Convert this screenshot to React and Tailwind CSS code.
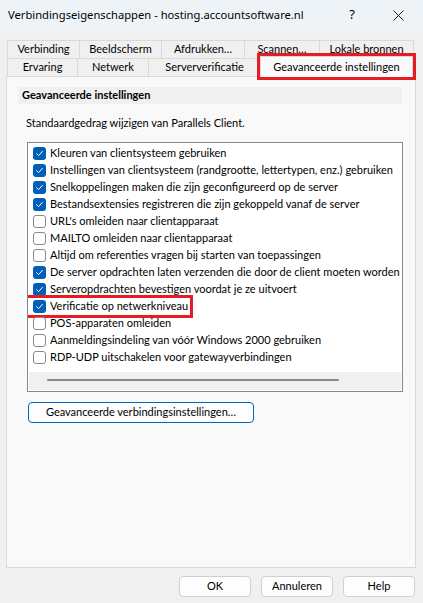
import React from 'react'

const font = { fontFamily: 'Lato, "Noto Sans", sans-serif' }
const titleFont = { fontFamily: '"Noto Sans", sans-serif' }

const items = [
  { label: 'Kleuren van clientsysteem gebruiken', on: true },
  { label: 'Instellingen van clientsysteem (randgrootte, lettertypen, enz.) gebruiken', on: true },
  { label: 'Snelkoppelingen maken die zijn geconfigureerd op de server', on: true },
  { label: 'Bestandsextensies registreren die zijn gekoppeld vanaf de server', on: true },
  { label: "URL's omleiden naar clientapparaat", on: false },
  { label: 'MAILTO omleiden naar clientapparaat', on: false },
  { label: 'Altijd om referenties vragen bij starten van toepassingen', on: false },
  { label: 'De server opdrachten laten verzenden die door de client moeten worden uitgevoerd', on: true },
  { label: 'Serveropdrachten bevestigen voordat je ze uitvoert', on: true },
  { label: 'Verificatie op netwerkniveau', on: true, mark: true },
  { label: 'POS-apparaten omleiden', on: false },
  { label: 'Aanmeldingsindeling van vóór Windows 2000 gebruiken', on: false },
  { label: 'RDP-UDP uitschakelen voor gatewayverbindingen', on: false },
]

function Check({ on }) {
  if (!on) {
    return <span className="w-[13px] h-[13px] shrink-0 rounded-[3px] border border-[#8a8a8a] bg-white" />
  }
  return (
    <span className="w-[13px] h-[13px] shrink-0 rounded-[3px] bg-[#005fb8] flex items-center justify-center">
      <svg width="9" height="9" viewBox="0 0 9 9" fill="none">
        <path d="M1.6 4.7 L3.6 6.6 L7.4 2.4" stroke="white" strokeWidth="1" strokeLinecap="round" strokeLinejoin="round" />
      </svg>
    </span>
  )
}

function Tab({ w, children }) {
  return (
    <div className={`${w} h-full flex items-center justify-center border-t border-l border-r border-[#d9d9d9] bg-[#f0f0f0] -ml-px first:ml-0 whitespace-nowrap`}>
      {children}
    </div>
  )
}

export default function App() {
  return (
    <div className="w-[423px] h-[603px] bg-[#f0f0f0] text-[11px] text-black overflow-hidden flex flex-col" style={font}>
      {/* Title bar */}
      <div className="h-[30px] shrink-0 bg-[#eef3f8] flex items-center pl-[8px]">
        <span className="flex-1 text-[11.2px] whitespace-nowrap" style={titleFont}>Verbindingseigenschappen - hosting.accountsoftware.nl</span>
        <span className="w-[46px] text-center text-[13px]" style={titleFont}>?</span>
        <span className="w-[46px] flex justify-center mr-[2px]">
          <svg width="11" height="11" viewBox="0 0 11 11">
            <path d="M0.5 0.5 L10.5 10.5 M10.5 0.5 L0.5 10.5" stroke="#1a1a1a" strokeWidth="1" />
          </svg>
        </span>
      </div>

      {/* Tabs */}
      <div className="pt-[10px] pl-[7px]">
        <div className="h-[18px] flex">
          <Tab w="w-[73px]">Verbinding</Tab>
          <Tab w="w-[83px]">Beeldscherm</Tab>
          <Tab w="w-[84px]">Afdrukken…</Tab>
          <Tab w="w-[76px]">Scannen…</Tab>
          <Tab w="w-[95px]">Lokale bronnen</Tab>
        </div>
        <div className="h-[18px] flex items-end">
          <Tab w="w-[71px]">Ervaring</Tab>
          <Tab w="w-[72px]">Netwerk</Tab>
          <Tab w="w-[113px]">Serververificatie</Tab>
          <div className="w-[153px] h-[21px] -ml-px -mb-px flex items-center justify-center bg-[#f9f9f9] border-t border-l border-r border-[#d9d9d9] outline outline-[3px] outline-[#e51c23] relative z-10 whitespace-nowrap">
            Geavanceerde instellingen
          </div>
        </div>
      </div>

      {/* Panel */}
      <div className="ml-[6px] w-[410px] h-[492px] bg-[#f9f9f9] border border-[#d9d9d9] pt-[10px] pl-[11px]">
        <div className="w-[384px] h-[17px] bg-[#f0f0f0] flex items-center pl-[4px] font-bold">
          Geavanceerde instellingen
        </div>
        <div className="mt-[11px] pl-[8px]">Standaardgedrag wijzigen van Parallels Client.</div>

        <div className="mt-[10px] ml-[9px] w-[376px] h-[250px] bg-white border border-[#828790] flex flex-col">
          <div className="pt-[2px] flex-1 overflow-hidden">
            {items.map((it) => (
              <div key={it.label} className="h-[17px] flex items-center gap-[4px] pl-[5px] whitespace-nowrap relative">
                <Check on={it.on} />
                <span>{it.label}</span>
                {it.mark && (
                  <div className="absolute left-[-5px] top-[-3px] w-[170px] h-[23px] border-[3px] border-[#e51c23]" />
                )}
              </div>
            ))}
          </div>
          <div className="h-[18px] mx-[1px] mb-[1px] bg-[#f0f0f0] flex items-center">
            <div className="ml-[18px] w-[292px] h-[2px] bg-[#8a8a8a] rounded-full -mt-[1px]" />
          </div>
        </div>

        <button className="mt-[10px] ml-[10px] w-[226px] h-[21px] bg-[#fdfdfd] border border-[#0067c0] rounded-[4px] whitespace-nowrap">
          Geavanceerde verbindingsinstellingen…
        </button>
      </div>

      {/* Bottom buttons */}
      <div className="flex justify-end gap-[10px] pr-[8px] mt-[8px]">
        <button className="w-[72px] h-[21px] bg-[#fdfdfd] border border-[#d0d0d0] rounded-[4px]">OK</button>
        <button className="w-[72px] h-[21px] bg-[#fdfdfd] border border-[#d0d0d0] rounded-[4px]">Annuleren</button>
        <button className="w-[72px] h-[21px] bg-[#fdfdfd] border border-[#d0d0d0] rounded-[4px]">Help</button>
      </div>
    </div>
  )
}
